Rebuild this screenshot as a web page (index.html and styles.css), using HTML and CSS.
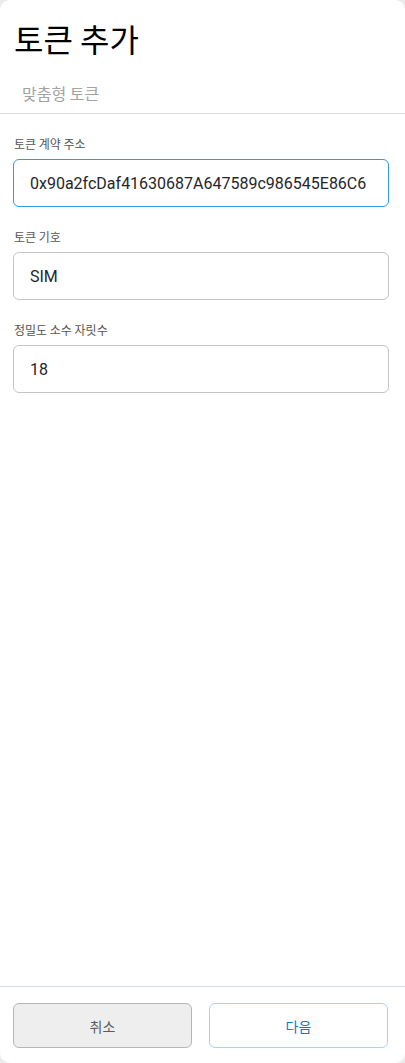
FILE: index.html
```html
<!DOCTYPE html>
<html>
<head>
  <title>토큰 추가</title>
  <link rel="stylesheet" href="styles.css">
</head>
<body>
  <div class="page">
    <div class="header">
      <h1>토큰 추가</h1>
      <div class="tabs">
        <span class="tab">맞춤형 토큰</span>
      </div>
    </div>

    <div class="form">
      <div class="field">
        <label for="address">토큰 계약 주소</label>
        <input type="text" id="address" class="input focused" value="0x90a2fcDaf41630687A647589c986545E86C6">
      </div>
      <div class="field">
        <label for="symbol">토큰 기호</label>
        <input type="text" id="symbol" class="input" value="SIM">
      </div>
      <div class="field">
        <label for="decimals">정밀도 소수 자릿수</label>
        <input type="text" id="decimals" class="input" value="18">
      </div>
    </div>

    <div class="footer">
      <button class="btn btn-cancel">취소</button>
      <button class="btn btn-next">다음</button>
    </div>
  </div>
</body>
</html>
```

FILE: styles.css
```css
body {
  margin: 0;
  padding: 0;
  background: #ececec;
  font-family: Roboto, "Noto Sans CJK KR", sans-serif;
}

.page {
  min-height: 100vh;
  box-sizing: border-box;
  background: #fff;
  border-radius: 10px;
  display: flex;
  flex-direction: column;
}

.header {
  padding: 16px 0 0;
}

h1 {
  margin: 0 14px;
  font-family: "Noto Sans CJK KR", sans-serif;
  font-size: 32px;
  font-weight: normal;
  line-height: 44px;
  color: #000;
}

.tabs {
  margin-top: 20px;
  padding: 0 22px 7px;
  border-bottom: 1px solid #dcdcdc;
}

.tab {
  font-family: "Noto Sans CJK KR", sans-serif;
  font-size: 16px;
  line-height: 26px;
  color: #a3a3a3;
}

.form {
  flex: 1;
  padding: 20px 16px 0 13px;
}

.field {
  margin-bottom: 20px;
}

.field label {
  display: block;
  font-family: "Noto Sans CJK KR", sans-serif;
  font-size: 12px;
  line-height: 20px;
  color: #555;
  margin: 0 0 5px 1px;
}

.input {
  display: block;
  width: 100%;
  box-sizing: border-box;
  height: 48px;
  padding: 0 16px;
  border: 1px solid #c4c4c4;
  border-radius: 6px;
  font-family: Roboto, sans-serif;
  font-size: 16px;
  color: #24272a;
  outline: none;
  background: #fff;
}

.input.focused {
  border-color: #2f9ae0;
}

.footer {
  border-top: 1px solid #d6dde6;
  display: flex;
  gap: 17px;
  padding: 16px 17px 15px 13px;
}

.btn {
  flex: 1;
  height: 45px;
  border-radius: 6px;
  font-family: "Noto Sans CJK KR", sans-serif;
  font-size: 14px;
  cursor: pointer;
}

.btn-cancel {
  background: #eeeeee;
  border: 1px solid #b5b5b5;
  color: #5b5b5b;
}

.btn-next {
  background: #fff;
  border: 1px solid #a8d2f2;
  color: #037dd6;
}
```
